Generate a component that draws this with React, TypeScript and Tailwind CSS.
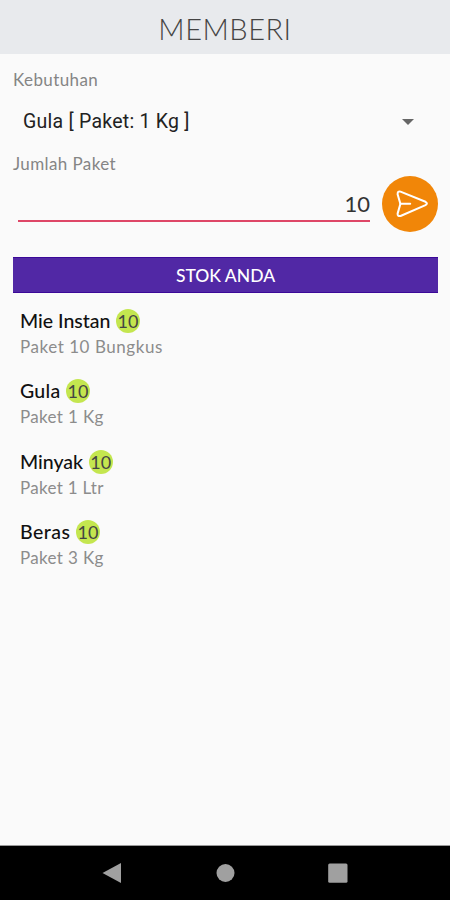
const stock = [
  { name: "Mie Instan", qty: 10, pack: "Paket 10 Bungkus", nameSpacing: "tracking-[0px]", packSpacing: "tracking-[0.55px]" },
  { name: "Gula", qty: 10, pack: "Paket 1 Kg", nameSpacing: "tracking-[0.3px]", packSpacing: "tracking-[0.35px]" },
  { name: "Minyak", qty: 10, pack: "Paket 1 Ltr", nameSpacing: "tracking-[0px]", packSpacing: "tracking-[0.3px]" },
  { name: "Beras", qty: 10, pack: "Paket 3 Kg", nameSpacing: "tracking-[0.5px]", packSpacing: "tracking-[0.35px]" },
];

function SendIcon() {
  return (
    <svg width="56" height="56" viewBox="0 0 56 56" fill="none" stroke="#fff" strokeWidth="2" strokeLinecap="round" strokeLinejoin="round">
      <path d="M18.5 15.6 L43.5 25.8 Q46.3 27.6 43.5 29.2 L18.5 40 Q15.4 40.6 15.6 37.6 L18.4 27.9 L15.6 18.2 Q15.6 14.8 18.5 15.6 Z" />
      <path d="M18.4 27.8 H28.2" />
    </svg>
  );
}

export default function App() {
  return (
    <div className="flex h-[900px] w-[450px] flex-col overflow-hidden bg-[#fafafa] font-['Lato','Open_Sans',sans-serif] whitespace-nowrap">
      <header className="flex h-[54px] shrink-0 items-center justify-center bg-[#e8eaed] pt-[3px]">
        <h1 className="text-[29px] leading-[36px] font-light tracking-[0.5px] text-[#444]">MEMBERI</h1>
      </header>

      <main className="flex flex-1 flex-col px-[13px] pt-[15px]">
        <label className="h-[22px] text-[17px] leading-[22px] tracking-[0.4px] text-[#858585]">Kebutuhan</label>
        <div className="mt-[18px] flex h-[26px] items-center justify-between pr-[23px] pl-[10px]">
          <span className="font-['Roboto',sans-serif] text-[19.5px] leading-[26px] tracking-[0.25px] text-[#222]">Gula [ Paket: 1 Kg ]</span>
          <svg width="12" height="6" viewBox="0 0 12 6" fill="#666"><path d="M0 0H12L6 6Z" /></svg>
        </div>
        <label className="mt-[18px] h-[22px] text-[17px] leading-[22px] tracking-[0.4px] text-[#858585]">Jumlah Paket</label>
        <div className="flex h-[57px] items-start">
          <div className="ml-[5px] flex h-[47px] w-[352px] shrink-0 items-end justify-end border-b-[2px] border-[#de4767] pb-[2px] text-[22px] leading-[28px] text-[#333]">10</div>
          <button className="mt-[1px] ml-[12px] size-[56px] shrink-0 rounded-full bg-[#f18608]">
            <SendIcon />
          </button>
        </div>

        <div className="mt-[25px] flex h-[36px] w-[425px] items-center justify-center border-y border-[#3b0898] bg-[#5128a5] pt-[2px] text-[17.5px] leading-[24px] font-medium text-white">STOK ANDA</div>

        <ul className="mt-[14px] flex flex-col gap-[16.4px] pl-[7px]">
          {stock.map((item) => (
            <li key={item.name} className="h-[54px]">
              <div className="flex h-[28px] items-center gap-[5.5px]">
                <span className={`text-[19.5px] leading-[28px] font-medium text-[#111] ${item.nameSpacing}`}>{item.name}</span>
                <span className="flex size-[24px] items-center justify-center rounded-full bg-[#c4e64f] text-[18px] leading-[24px] text-[#444]">{item.qty}</span>
              </div>
              <p className={`text-[17px] leading-[24px] text-[#8c8c8c] ${item.packSpacing}`}>{item.pack}</p>
            </li>
          ))}
        </ul>
      </main>

      <nav className="flex h-[55px] shrink-0 items-center justify-center border-t border-[#999] bg-black">
        <svg width="450" height="54" viewBox="0 846 450 54" fill="#a0a0a0">
          <path d="M102.5 873 L121 863 V883 Z" />
          <circle cx="225.5" cy="873" r="9" />
          <rect x="328.2" y="863.5" width="19.3" height="19.3" rx="1.5" />
        </svg>
      </nav>
    </div>
  );
}
